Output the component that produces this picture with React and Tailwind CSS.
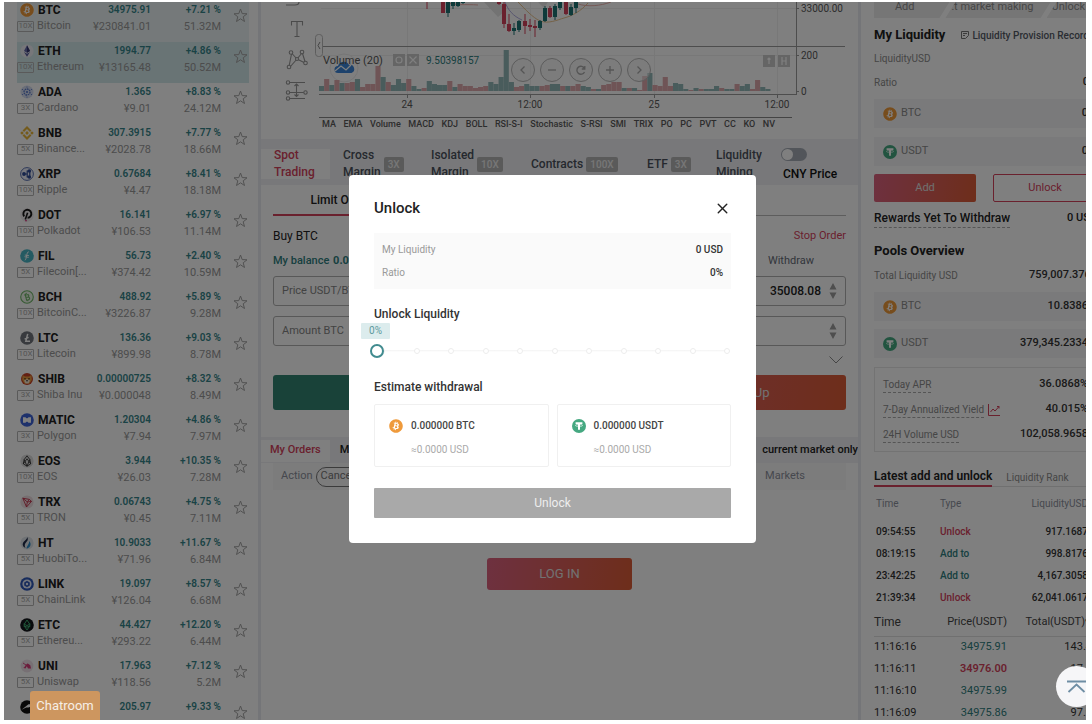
import React, { useState } from "react";
import { FaBitcoin } from "react-icons/fa";
import { X } from "lucide-react";

const GRADIENT = "bg-linear-[100deg] from-[#dd6280] to-[#dc5c36]";

function BtcIcon() {
  return (
    <span className="flex size-[14px] shrink-0 items-center justify-center rounded-full bg-white">
      <FaBitcoin className="size-[14px] text-[#ef9a3b]" aria-hidden="true" />
    </span>
  );
}

function UsdtIcon() {
  return (
    <svg className="size-[14px] shrink-0" viewBox="0 0 14 14" aria-hidden="true">
      <circle cx="7" cy="7" r="7" fill="#45a881" />
      <path d="M3.6 3.3h6.8v1.9H8v5.6H6V5.200H3.600z" fill="#fff" />
      <ellipse cx="7" cy="6.500" rx="3.600" ry="0.900" fill="none" stroke="#fff" strokeWidth="0.600" />
    </svg>
  );
}

const COIN_ART = {
  ETH: (
    <g>
      <circle cx="7" cy="7" r="6.600" fill="#eeeef4" />
      <path d="M7 1.300 10 7 7 8.800 4 7z" fill="#6468a8" />
      <path d="M7 1.300V8.800L10 7z" fill="#34376e" />
      <path d="M4 7.900 7 12.700 10 7.900 7 9.700z" fill="#5a5d9c" />
    </g>
  ),
  ADA: (
    <g fill="#5878c8">
      <circle cx="7" cy="7" r="6.500" fill="#d5dcf0" />
      <circle cx="7" cy="7" r="3" fill="none" stroke="#5878c8" strokeWidth="1.300" strokeDasharray="1.600 0.700" />
      <circle cx="7" cy="7" r="1.100" />
      <circle cx="7" cy="2" r="0.600" />
      <circle cx="7" cy="12" r="0.600" />
      <circle cx="2.500" cy="4.500" r="0.600" />
      <circle cx="11.500" cy="4.500" r="0.600" />
      <circle cx="2.500" cy="9.500" r="0.600" />
      <circle cx="11.500" cy="9.500" r="0.600" />
    </g>
  ),
  BNB: (
    <g fill="none" stroke="#e8b63a" strokeWidth="2.100">
      <path d="M3.300 5.300 7 1.600l3.700 3.700M3.300 8.700 7 12.400l3.700-3.700" />
      <path d="M7 5.100 8.900 7 7 8.900 5.100 7z" fill="#e8b63a" stroke="none" />
      <path d="M0.200 7 2 5.200 3.800 7 2 8.800zM10.200 7 12 5.200 13.800 7 12 8.800z" fill="#e8b63a" stroke="none" />
    </g>
  ),
  XRP: (
    <g>
      <circle cx="7" cy="7" r="6.400" fill="#eef1fa" stroke="#4a62a8" strokeWidth="0.900" />
      <circle cx="4" cy="7" r="1.900" fill="#2f4c98" />
      <circle cx="9.300" cy="4" r="1.800" fill="#2f4c98" />
      <circle cx="9.300" cy="10" r="1.800" fill="#2f4c98" />
      <path d="M4 7h3.200V4h2M7.200 7v3h2M9.800 4v6" fill="none" stroke="#2f4c98" strokeWidth="1.200" />
    </g>
  ),
  DOT: (
    <g>
      <circle cx="7" cy="7" r="6.800" fill="#f0ecee" />
      <path d="M4.200 8.300A4 4 0 1 1 7.600 9.800" fill="none" stroke="#161616" strokeWidth="1.900" />
      <path d="M7.600 4.800 5.300 11.500" stroke="#161616" strokeWidth="1.600" />
      <circle cx="6" cy="12.600" r="0.900" fill="#d83a80" />
    </g>
  ),
  FIL: (
    <g>
      <circle cx="7" cy="7" r="6.800" fill="#48b4c4" />
      <path d="M8.800 2.800c-1.600 0-1.700 2-2.200 4.200S5.800 11.200 4.800 11.200M4.800 6l4.200.700M4.500 7.700l4.200.700" fill="none" stroke="#fff" strokeWidth="0.900" />
    </g>
  ),
  BCH: (
    <g>
      <circle cx="7" cy="7" r="6.300" fill="#eef7ea" stroke="#6fb568" strokeWidth="1.100" />
      <path d="m5 3.900 1.600 6.300 2-.500c1.500-.400 1.400-2.400-.300-2.700 1-.800.500-2.600-1-2.300L4.400 5.200M5.800 7.500l2.500-.500M6 3l.400 1.200M7.600 10l.400 1.200" fill="none" stroke="#6fb568" strokeWidth="1.100" />
    </g>
  ),
  LTC: (
    <g>
      <circle cx="7" cy="7" r="6.800" fill="#70757c" />
      <path d="M7.700 2.900 5.800 10.300h4.200M4.600 8.100l4-1.700" fill="none" stroke="#fff" strokeWidth="1.500" />
    </g>
  ),
  SHIB: (
    <g>
      <circle cx="7" cy="7" r="6" fill="#c83f24" />
      <path d="M2.500 3 5 4.500h4L11.500 3l.3 5-2.300 3.500h-5L2.200 8z" fill="#e8993c" />
      <path d="M4 8.500 7 7l3 1.500-1.500 3h-3z" fill="#f6e7d0" />
      <circle cx="5" cy="6.800" r="0.700" fill="#222" />
      <circle cx="9" cy="6.800" r="0.700" fill="#222" />
      <circle cx="7" cy="8.800" r="0.800" fill="#222" />
    </g>
  ),
  MATIC: (
    <g>
      <circle cx="7" cy="7" r="6.800" fill="#3c63d8" />
      <path d="M3 4.200h2.400L7 5.500l1.600-1.300H11v5.600H8.600L7 8.500 5.400 9.800H3z" fill="#fff" />
      <circle cx="7" cy="3.800" r="1.100" fill="#3c63d8" />
      <circle cx="7" cy="10.200" r="1.100" fill="#3c63d8" />
    </g>
  ),
  EOS: (
    <g>
      <circle cx="7" cy="7" r="6.600" fill="#dcdcdc" />
      <path d="M7 1.800 4.200 5.500 3.300 9.800 7 12.200l3.700-2.400-.900-4.300zM4.200 5.500 7 12.200l2.800-6.700M3.300 9.800 7 4.800l3.700 5" fill="none" stroke="#222" strokeWidth="0.800" />
    </g>
  ),
  TRX: (
    <g>
      <circle cx="7" cy="7" r="6.600" fill="#efdfe2" />
      <path d="m2.800 3.200 6.500 1.200 2.200 2L6.500 12zM2.800 3.200 7.300 7l4.200-.600M7.300 7 6.500 12M7.300 7l2-2.600" fill="none" stroke="#c0304a" strokeWidth="0.900" />
    </g>
  ),
  HT: (
    <g>
      <circle cx="7" cy="7" r="6.600" fill="#dfe5ea" />
      <path d="M7.300 1C8.500 3.500 7.500 5 6 6.500S4.400 10 5.500 12C2.200 10.500 2 7.500 4 5.500S7 3 7.300 1z" fill="#1f2a48" />
      <path d="M9.200 5c2.200 2.500 2 6-2.500 7.800C5.900 10.500 9.300 9 9.200 5z" fill="#2a8bc8" />
    </g>
  ),
  LINK: (
    <g>
      <circle cx="7" cy="7" r="6.800" fill="#2f58b8" />
      <circle cx="7" cy="7" r="4.600" fill="#e6ecfa" />
      <path d="m7 3.800 2.800 1.600v3.200L7 10.200 4.200 8.600V5.400z" fill="#2f58b8" />
      <circle cx="7" cy="7" r="1.200" fill="#e6ecfa" />
    </g>
  ),
  ETC: (
    <g>
      <circle cx="7" cy="7" r="6.800" fill="#12161a" />
      <path d="m7 2 2.700 4.200L7 7.600 4.300 6.200zM4.300 8 7 12l2.700-4L7 9.200zM4.200 5.400v3.400M9.800 5.400v3.400" fill="none" stroke="#3fae73" strokeWidth="1" />
    </g>
  ),
  UNI: (
    <g>
      <circle cx="7" cy="7" r="6.400" fill="#efe0e8" />
      <path d="M2.800 8.800c2.200.400 2.500-3.800 5-4.300l2.500 1.800.700 3.300H8L6.800 7.300 5.500 9.600z" fill="#d83a78" />
      <path d="m3 4 3 2" stroke="#d83a78" strokeWidth="0.900" />
    </g>
  ),
  BSV: (
    <g>
      <circle cx="7" cy="7" r="6.800" fill="#111" />
      <path d="M1.500 9.800 8.500 4.300h5v1.500L8.300 7.500h-2z" fill="#fff" />
    </g>
  ),
};

const COINS = [
  ["BTC", "10X", "Bitcoin", "34975.91", "¥230841.01", "+7.21 %", "51.32M"],
  ["ETH", "10X", "Ethereum", "1994.77", "¥13165.48", "+4.86 %", "50.52M"],
  ["ADA", "3X", "Cardano", "1.365", "¥9.01", "+8.83 %", "24.12M"],
  ["BNB", "5X", "Binance...", "307.3915", "¥2028.78", "+7.77 %", "18.66M"],
  ["XRP", "10X", "Ripple", "0.67684", "¥4.47", "+8.41 %", "18.18M"],
  ["DOT", "10X", "Polkadot", "16.141", "¥106.53", "+6.97 %", "11.14M"],
  ["FIL", "5X", "Filecoin[...", "56.73", "¥374.42", "+2.40 %", "10.59M"],
  ["BCH", "10X", "BitcoinC...", "488.92", "¥3226.87", "+5.89 %", "9.28M"],
  ["LTC", "10X", "Litecoin", "136.36", "¥899.98", "+9.03 %", "8.78M"],
  ["SHIB", "3X", "Shiba Inu", "0.00000725", "¥0.000048", "+8.32 %", "8.49M"],
  ["MATIC", "3X", "Polygon", "1.20304", "¥7.94", "+4.86 %", "7.97M"],
  ["EOS", "10X", "EOS", "3.944", "¥26.03", "+10.35 %", "7.28M"],
  ["TRX", "5X", "TRON", "0.06743", "¥0.45", "+4.75 %", "7.11M"],
  ["HT", "5X", "HuobiTo...", "10.9033", "¥71.96", "+11.67 %", "6.84M"],
  ["LINK", "5X", "ChainLink", "19.097", "¥126.04", "+8.57 %", "6.68M"],
  ["ETC", "5X", "Ethereu...", "44.427", "¥293.22", "+12.20 %", "6.44M"],
  ["UNI", "5X", "Uniswap", "17.963", "¥118.56", "+7.12 %", "5.2M"],
  ["BSV", "", "", "205.97", "", "+9.33 %", ""],
];

function MarketList() {
  return (
    <aside className="w-[254px] shrink-0 overflow-hidden bg-white pr-[9px] pl-[13px]">
      <table className="-mt-px w-full table-fixed border-collapse">
        <colgroup>
          <col className="w-[76px]" />
          <col className="w-[58px]" />
          <col className="w-[70px]" />
          <col className="w-[28px]" />
        </colgroup>
        <tbody>
          {COINS.map(([sym, lev, name, price, cny, change, vol], i) => (
            <tr key={sym} className={"h-[41px] align-top " + (i === 0 ? "bg-[#ebf3f4]" : i === 1 ? "bg-[#d3e8eb]" : "")}>
              <td className="p-0">
                <div className="mt-px flex h-4 items-center gap-1 pl-[3px] text-[12px] leading-4 font-bold text-[#202020]">
                  {sym === "BTC" ? (
                    <BtcIcon />
                  ) : (
                    <svg className="size-[14px] shrink-0" viewBox="0 0 14 14" aria-hidden="true">
                      {COIN_ART[sym]}
                    </svg>
                  )}
                  {sym === "BSV" ? "" : sym}
                </div>
                {lev && (
                  <div className="flex h-4 items-center gap-[3px] whitespace-nowrap text-[11px] leading-4 text-[#999]">
                    <span className="flex h-[11px] w-[17px] shrink-0 items-center justify-center rounded-[1px] border border-[#b4b4b4] text-[8px] leading-none text-[#aaa]">
                      {lev}
                    </span>
                    {name}
                  </div>
                )}
              </td>
              <td className="p-0 text-right whitespace-nowrap">
                <div className="mt-px text-[10px] leading-4 font-semibold text-[#35858a]">{price}</div>
                <div className="mt-px text-[11px] leading-4 text-[#999]">{cny}</div>
              </td>
              <td className="p-0 text-right whitespace-nowrap">
                <div className="mt-px text-[10px] leading-4 font-semibold text-[#35858a]">{change}</div>
                <div className="mt-px text-[11px] leading-4 text-[#999]">{vol}</div>
              </td>
              <td className="p-0">
                <button type="button" aria-label={"Favourite " + sym} className="mt-[7px] ml-[12px] block">
                  <svg className="size-[15px]" viewBox="0 0 15 15" fill="none" stroke="#a3a3a3" strokeWidth="1" aria-hidden="true">
                    <path d="m7.500 1 1.700 4.600 4.800.200-3.800 3 1.300 4.700-4-2.700-4 2.700 1.300-4.700-3.800-3 4.800-.200z" />
                  </svg>
                </button>
              </td>
            </tr>
          ))}
        </tbody>
      </table>
    </aside>
  );
}

// colour + height of every volume bar, left to right
const VOLUME =
  "g5 r12 g6 r11 g8 r8 r9 g12 r4 r7 r7 r25 g14 r9 g6 g12 g8 r12 g5 g2 r3 g10 g7 g6 g6 r10 g4 r7 r5 r5 r3 r4 r5 g9 g7 g14 g41 g9 r4 r5 g7 g5 g5 r5 r6 g7 g7 " +
  "r5 g5 r5 r7 g5 g4 r2 g2 r6 r7 r9 r9 g3 r3 g3 r1 r15 g18 r6 r5 r14 r5 g8 g7 g2 r1 g3 r2 g2 g2 g5 r3 g2 g2 r7 g5 g7 r2 r11 g4 g2";

// x, body top, body bottom, wick top, wick bottom, colour
const CANDLES = [
  [427, 0, 2, 0, 9, "r"],
  [443, 0, 13, 0, 13, "r"],
  [448, 0, 13, 0, 17, "g"],
  [453, 0, 6, 0, 9, "g"],
  [458, 0, 6, 0, 7, "g"],
  [463, 0, 3, 0, 4, "g"],
  [499, 0, 4, 0, 5, "r"],
  [504, 4, 24, 2, 28, "r"],
  [509, 24, 31, 14, 32, "r"],
  [514, 28, 31, 23, 35, "g"],
  [519, 21, 30, 20, 32, "g"],
  [525, 21, 26, 14, 34, "r"],
  [530, 25, 27, 19, 31, "r"],
  [535, 26, 28, 20, 37, "r"],
  [540, 21, 28, 20, 30, "g"],
  [545, 8, 21, 6, 22, "g"],
  [550, 8, 17, 6, 18, "r"],
  [555, 6, 17, 4, 20, "g"],
  [560, 0, 8, 0, 10, "g"],
  [566, 2, 14, 0, 15, "r"],
  [571, 7, 15, 4, 16, "g"],
  [576, 0, 8, 0, 13, "g"],
];

const INDICATORS = "MA EMA Volume MACD KDJ BOLL RSI-S-I Stochastic S-RSI SMI TRIX PO PC PVT CC KO NV".split(" ");

function ChartNav({ label, d }) {
  return (
    <button type="button" aria-label={label} className="flex size-6 items-center justify-center rounded-full border border-[#b8b8b8] bg-[#f2f2f2]/50">
      <svg className="size-[10px]" viewBox="0 0 10 10" fill="none" stroke="#aaa" strokeWidth="1.300" aria-hidden="true">
        <path d={d} />
      </svg>
    </button>
  );
}

function Chart() {
  return (
    <section className="bg-white pb-[9px]">
      <div className="relative overflow-hidden">
        <svg className="block h-[116px] w-[597px]" viewBox="261 2 597 116" role="img" aria-label="BTC price and volume chart">
          <g stroke="#f0f0f0">
            <path d="M407.500 2v93M530.500 2v93M654.500 2v93M777.500 2v93M321 8.500h475M321 55.500h475" />
          </g>
          {/* drawing tools */}
          <g fill="none" stroke="#969696" strokeWidth="1.100">
            <path d="M286 5h9c3 0 4-1 4-3" />
            <path d="M291.500 25.500v-4h11v4M297 21.500v15M294.500 36.500h5" />
            <path d="M289 66.500 291.500 54M291.500 53l5.500 6 5-6M297 59l-7 8M297 59l8 4M302.500 53.500l2.500 8" />
            <circle cx="291" cy="52.500" r="1.800" fill="#fff" />
            <circle cx="302" cy="52" r="1.800" fill="#fff" />
            <circle cx="297" cy="59" r="1.500" fill="#fff" />
            <circle cx="289" cy="67" r="1.800" fill="#fff" />
            <circle cx="305.500" cy="63" r="1.800" fill="#fff" />
            <path d="M289 82.500h16M289 92.500h15M289 98.500h16M296.500 84v12M294.500 86l2-2 2 2M294.500 94.500l2 2 2-2" />
            <circle cx="288" cy="82.500" r="1.700" fill="#fff" />
            <circle cx="288" cy="92.500" r="1.700" fill="#fff" />
            <circle cx="305.500" cy="92.500" r="1.700" fill="#fff" />
            <circle cx="288" cy="98.500" r="1.700" fill="#fff" />
          </g>
          <path d="m484 2 14 15 7-6-6-9zM538 2h10l-4 6z" fill="#e6e6e6" />
          {/* price pane */}
          <path d="M505 2c3 8 8 14 17 18" fill="none" stroke="#a7a3dd" strokeWidth="0.900" />
          <path d="M518 2c8 8 14 15 22 19 9 3 17-1 24-3 8-2 17-7 24-15" fill="none" stroke="#e6bb80" strokeWidth="0.900" />
          <path d="M578 4c10 3 22 2 33-2M446 2c8 4 20 2 32 3" fill="none" stroke="#e9a9a4" strokeWidth="0.900" />
          {CANDLES.map(([x, top, bottom, wickTop, wickBottom, c]) => (
            <g key={x} fill={c === "r" ? "#d5425c" : "#1c7474"}>
              <rect x={x - 2} y={top} width="4" height={bottom - top} />
              <rect x={x - 0.5} y={wickTop} width="1" height={wickBottom - wickTop} />
            </g>
          ))}
          {/* volume pane */}
          <circle cx="344" cy="68" r="14" fill="#fff" stroke="#ececec" />
          {VOLUME.split(" ").map((bar, i) => (
            <rect
              key={i}
              x={319 + i * 5.13}
              y={91 - Number(bar.slice(1))}
              width="5.130"
              height={Number(bar.slice(1))}
              fill={bar[0] === "r" ? "#dfa9ad" : "#92b8b8"}
            />
          ))}
          <path d="M338 73a3.500 3.500 0 0 1 0-7 6 6 0 0 1 11-1 4.200 4.200 0 0 1 2.500 8z" fill="#3b84d8" />
          <path d="m335 71 6-5 5 4 5-5" fill="none" stroke="#fff" strokeWidth="1.300" />
          <g stroke="#9a9a9a">
            <path d="M321 46.500h524M319 94.500h477M796.500 2v93" />
            <path d="M319 117.500h473" stroke="#888" />
            <path d="M796 8.500h3M796 55.500h3M796 91.500h3M407.500 95v3M530.500 95v3M654.500 95v3M777.500 95v3" />
          </g>
          <rect x="315.500" y="34.500" width="7" height="22" rx="3" fill="#fff" stroke="#bbb" />
          <path d="m320 42-2 3.500 2 3.500" fill="none" stroke="#888" />
          <g fontFamily="Roboto, sans-serif" fontSize="10" fill="#5a5a5a">
            <text x="323" y="63.500" fontSize="11">Volume (20)</text>
            <text x="426" y="63.500" fill="#2e8080">9.50398157</text>
            <text x="801" y="12">33000.00</text>
            <text x="801" y="59">200</text>
            <text x="801" y="95">0</text>
            <g textAnchor="middle">
              <text x="407" y="108">24</text>
              <text x="530" y="108">12:00</text>
              <text x="654" y="108">25</text>
              <text x="777" y="108">12:00</text>
            </g>
          </g>
          <g fill="#cacaca">
            <rect x="393" y="54" width="12" height="12" />
            <rect x="407" y="54" width="12" height="12" />
            <rect x="763" y="55" width="12" height="12" />
            <rect x="778" y="55" width="12" height="12" />
          </g>
          <g fill="none" stroke="#fff" strokeWidth="1.200">
            <circle cx="399" cy="60" r="3" />
            <path d="m409.500 56.500 7 7M416.500 56.500l-7 7" />
            <path d="M769 64v-6M767.500 59.500l1.500-1.500 1.500 1.500M782 57v8M786 57v8M782 61h4" />
          </g>
        </svg>
        <div className="absolute top-[56px] left-[250px] flex gap-[5px]">
          <ChartNav label="Scroll left" d="M6.500 1.500 3 5l3.500 3.500" />
          <ChartNav label="Zoom out" d="M1 5h8" />
          <ChartNav label="Reset" d="M8.500 3.500A4 4 0 1 0 8.500 7M8.800 1v3h-3" />
          <ChartNav label="Zoom in" d="M1 5h8M5 1v8" />
          <ChartNav label="Scroll right" d="M3.500 1.500 7 5 3.500 8.500" />
        </div>
      </div>
      <div className="ml-[61px] flex w-[453px] justify-between text-[9px] leading-3 font-medium text-[#5a5a5a]">
        {INDICATORS.map((t) => (
          <button key={t} type="button">
            {t}
          </button>
        ))}
      </div>
    </section>
  );
}

function TradeTab({ width, label, badge, active }) {
  return (
    <button type="button" className={"flex shrink-0 items-center gap-[3px] pl-[13px] text-left text-[12px] leading-[17px] font-medium " + width + (active ? " bg-white text-[#d5425c]" : " text-[#4b515c]")}>
      <span className="w-min">{label}</span>
      {badge && <span className="rounded-[2px] bg-[#b5b5b5] px-1 text-[10px] leading-[15px] text-[#eee]">{badge}</span>}
    </button>
  );
}

function Spinner() {
  return (
    <svg className="h-[18px] w-2" viewBox="0 0 8 18" fill="#9c9c9c" aria-hidden="true">
      <path d="M4 1 7.500 7.500h-7zM4 17 .5 10.500h7z" />
    </svg>
  );
}

function Field({ label, value }) {
  return (
    <label className="flex h-[30px] items-center justify-between gap-2 rounded-[3px] border border-[#b0b0b0] px-2 text-[11px] text-[#858585]">
      <span className="shrink-0">{label}</span>
      <input type="text" defaultValue={value} className="min-w-0 flex-1 text-right text-[12px] font-medium text-[#222] outline-none" />
      <Spinner />
    </label>
  );
}

function OrderColumn({ title, right, side, price, action, actionLabel, color }) {
  return (
    <div className="flex flex-1 flex-col">
      <div className="flex h-5 items-center justify-between text-[12px] text-[#222]">
        <span>{title}</span>
        {right && <a href="#stop" className="text-[11px] text-[#d5425c]">{right}</a>}
      </div>
      <div className="mt-[5px] flex h-5 items-center justify-between text-[11px] font-medium text-[#2e8080]">
        <span>
          My balance <b className="ml-px">0.00000</b>
        </span>
        <a href="#withdraw" className="mr-8 font-normal text-[#666c78]">{side}</a>
      </div>
      <div className="mt-[5px] flex flex-col gap-[10px]">
        <Field label="Price USDT/BTC" value={price} />
        <Field label="Amount BTC" value="" />
      </div>
      <div className="mt-[6px] flex h-4 items-center justify-end pr-[3px]">
        <svg className="h-2 w-[14px]" viewBox="0 0 14 8" fill="none" stroke="#8a8a8a" aria-hidden="true">
          <path d="m.5.5 6.500 6.500L13.500.5" />
        </svg>
      </div>
      <button type="button" aria-label={actionLabel} className={"mt-[7px] h-[35px] rounded-[3px] text-[13px] text-[#e4e4e4] " + color}>
        {action}
      </button>
    </div>
  );
}

function TradePanel() {
  return (
    <main className="flex min-w-0 flex-1 flex-col overflow-hidden bg-white">
      <Chart />
      <div className="flex h-[46px] items-stretch bg-[#f0f1f4] pr-3">
        <div className="flex items-center pt-1">
          <TradeTab width="w-[69px] h-[30px]" label="Spot Trading" active />
          <TradeTab width="w-[88px]" label="Cross Margin" badge="3X" />
          <TradeTab width="w-[100px]" label="Isolated Margin" badge="10X" />
          <TradeTab width="w-[116px]" label="Contracts" badge="100X" />
          <TradeTab width="w-[69px]" label="ETF" badge="3X" />
          <TradeTab width="w-[72px]" label="Liquidity Mining" />
        </div>
        <label className="ml-[6px] flex flex-col pt-[9px] text-[12px] leading-[17px] font-medium whitespace-nowrap text-[#111]">
          <input type="checkbox" className="peer sr-only" />
          <span className="flex h-[13px] w-[26px] rounded-full bg-[#a5abb5] p-px peer-checked:justify-end">
            <span className="size-[11px] rounded-full bg-white" />
          </span>
          <span className="mt-[5px] ml-[2px]">CNY Price</span>
        </label>
      </div>
      <div className="mx-3 flex border-b border-[#bbb]">
        <button type="button" className="-mb-px h-[31px] w-[143px] border-b-2 border-[#d5425c] text-[12px] font-medium text-[#222]">
          <span className="-ml-[8px]">Limit Order</span>
        </button>
      </div>
      <div className="mx-3 mt-[10px] flex gap-6">
        <OrderColumn title="Buy BTC" side="Deposit" price="35008.08" actionLabel="Log In or Sign Up" color="bg-[#338472]" />
        <OrderColumn title="Sell BTC" right="Stop Order" side="Withdraw" price="35008.08" action="Log In Now / Sign Up" color={GRADIENT} />
      </div>
      <div className="mt-[27px] flex h-[26px] items-center justify-between bg-[#f0f1f4] pt-px text-[11px] font-medium text-[#222]">
        <div className="flex h-full items-center">
          <button type="button" className="h-[22px] bg-white px-[9px] text-[#d5425c]">My Orders</button>
          <button type="button" className="ml-[10px]">My Trades</button>
        </div>
        <label className="flex items-center gap-2">
          <input type="checkbox" className="size-3" />
          <span>Show</span>
          <span>current market only</span>
        </label>
      </div>
      <div className="mx-3 flex h-[27px] items-center justify-between bg-[#f8f8f9] pr-[41px] pl-2 text-[11px] text-[#8c909c]">
        <div className="flex items-center gap-[3px]">
          Action
          <button type="button" className="h-5 rounded-full border border-[#777] px-1 text-[#777]">Cancel All</button>
        </div>
        <span>Markets</span>
      </div>
      <div className="flex flex-1 justify-center pt-[68px]">
        <button type="button" className={"h-8 w-[145px] rounded-[3px] text-[13px] text-[#e4e4e4] " + GRADIENT}>
          LOG IN
        </button>
      </div>
    </main>
  );
}

function PoolRow({ icon, name, value }) {
  return (
    <div className="flex h-[29px] items-center gap-1 bg-[#f5f5f6] px-[9px] text-[11px]">
      {icon}
      <span className="text-[#8c8c8c]">{name}</span>
      <span className="ml-auto font-medium text-[#333]">{value}</span>
    </div>
  );
}

function StatRow({ label, value, chart }) {
  return (
    <div className="flex h-[25px] items-center text-[10px]">
      <span className="border-b border-dashed border-[#aaa] text-[#8c8c8c]">{label}</span>
      {chart && (
        <svg className="ml-1 size-3" viewBox="0 0 12 12" fill="none" stroke="#d5425c" aria-hidden="true">
          <path d="M.5 0v11.500H12" />
          <path d="m2.500 8 2.500-3 2 2 4-4.500M9 2.500h2v2" />
        </svg>
      )}
      <span className="ml-auto text-[11px] font-medium text-[#333]">{value}</span>
    </div>
  );
}

const EVENTS = [
  ["09:54:55", "Unlock", "917.1687"],
  ["08:19:15", "Add to", "998.8176"],
  ["23:42:25", "Add to", "4,167.3058"],
  ["21:39:34", "Unlock", "62,041.0617"],
];

const TRADES = [
  ["11:16:16", "34975.91", "143.4", "up"],
  ["11:16:11", "34976.00", "17.4", "down"],
  ["11:16:10", "34975.99", "20.9", "up"],
  ["11:16:09", "34975.86", "97.9", "up"],
];

function LiquidityPanel() {
  return (
    <aside className="w-[225px] shrink-0 overflow-hidden bg-white pl-[13px]">
      <div className="w-[223px]">
        <div className="-mr-3 flex h-4 text-[11px] leading-[10px] text-[#8c8c8c]">
          <span className="w-[76px] bg-[#ececec] pr-[14px] text-center [clip-path:polygon(0_0,100%_0,calc(100%-10px)_100%,0_100%)]">Add</span>
          <span className="-ml-1 w-[106px] overflow-hidden bg-[#ececec] pl-[6px] whitespace-nowrap [clip-path:polygon(10px_0,100%_0,calc(100%-10px)_100%,0_100%)]">
            :t market making
          </span>
          <span className="-ml-1 w-[63px] bg-[#ececec] pl-[5px] [clip-path:polygon(10px_0,100%_0,100%_100%,0_100%)]">Unlock</span>
        </div>
        <div className="mt-[7px] flex h-5 items-center whitespace-nowrap">
          <h2 className="text-[13px] font-bold text-[#222]">My Liquidity</h2>
          <a href="#records" className="ml-4 flex items-center gap-[3px] text-[10px] font-medium text-[#555b66]">
            <svg className="size-2" viewBox="0 0 8 8" fill="none" stroke="#777" aria-hidden="true">
              <path d="M.5.5h7v4l-3 3h-4zM2 2.500h4M2 4.500h2" />
            </svg>
            Liquidity Provision Records
          </a>
        </div>
        <div className="mt-px flex h-6 items-center text-[10px] text-[#8c8c8c]">LiquidityUSD</div>
        <div className="flex h-6 items-center justify-between text-[10px] text-[#8c8c8c]">
          Ratio <span className="text-[11px] font-medium text-[#333]">0%</span>
        </div>
        <div className="mt-[5px] flex flex-col gap-[9px]">
          <PoolRow icon={<BtcIcon />} name="BTC" value="0" />
          <PoolRow icon={<UsdtIcon />} name="USDT" value="0" />
        </div>
        <div className="mt-2 flex gap-[17px] text-[11px]">
          <button type="button" className={"h-7 flex-1 rounded-[2px] text-[#e0e0e0] " + GRADIENT}>Add</button>
          <button type="button" className="h-7 flex-1 rounded-[2px] border border-[#d5425c] text-[#d5425c]">Unlock</button>
        </div>
        <div className="mt-[7px] flex h-[18px] items-center justify-between text-[12px] font-medium whitespace-nowrap text-[#222]">
          <span className="border-b border-dashed border-[#aaa]">Rewards Yet To Withdraw</span>
          <span className="text-[11px]">0 USD</span>
        </div>
        <h2 className="mt-[14px] text-[13px] leading-5 font-bold text-[#222]">Pools Overview</h2>
        <div className="mt-[2px] flex h-6 items-center justify-between text-[10px] text-[#8c8c8c]">
          Total Liquidity USD <span className="text-[11px] font-medium text-[#333]">759,007.3767</span>
        </div>
        <div className="mt-[5px] flex flex-col gap-2">
          <PoolRow icon={<BtcIcon />} name="BTC" value="10.8386" />
          <PoolRow icon={<UsdtIcon />} name="USDT" value="379,345.2334" />
        </div>
        <div className="mt-[9px] border border-[#e6e6e6] px-2 pt-1 pb-1">
          <StatRow label="Today APR" value="36.0868%" />
          <StatRow label="7-Day Annualized Yield" value="40.015%" chart />
          <StatRow label="24H Volume USD" value="102,058.9658" />
        </div>
        <div className="mt-[15px] flex h-5 items-start gap-[14px] border-b border-[#e0e0e0] whitespace-nowrap">
          <button type="button" className="h-5 border-b-2 border-[#d5425c] text-[12px] font-semibold text-[#222]">Latest add and unlock</button>
          <button type="button" className="h-5 text-[10px] text-[#8c8c8c]">Liquidity Rank</button>
        </div>
        <table className="w-full table-fixed">
          <thead>
            <tr className="h-[33px] text-left text-[10px] text-[#8c909c]">
              <th className="w-[66px] p-0 pl-[2px] font-normal">Time</th>
              <th className="p-0 font-normal">Type</th>
              <th className="p-0 pr-[9px] text-right font-normal">LiquidityUSD</th>
            </tr>
          </thead>
          <tbody>
            {EVENTS.map(([time, type, amount]) => (
              <tr key={time} className="h-[22px] text-[10px] font-medium text-[#333]">
                <td className="p-0 pl-[2px]">{time}</td>
                <td className={"p-0 " + (type === "Unlock" ? "text-[#d5425c]" : "text-[#2e8080]")}>{type}</td>
                <td className="p-0 pr-[9px] text-right">{amount}</td>
              </tr>
            ))}
          </tbody>
        </table>
        <table className="w-full table-fixed">
          <thead>
            <tr className="h-[28px] border-b border-[#e0e0e0] text-left text-[11px] text-[#444]">
              <th className="w-[58px] p-0 text-[12px] font-normal">Time</th>
              <th className="w-[75px] p-0 text-right font-normal">Price(USDT)</th>
              <th className="p-0 pr-[6px] text-right font-normal">Total(USDT)▾</th>
            </tr>
          </thead>
          <tbody>
            {TRADES.map(([time, price, total, dir]) => (
              <tr key={time} className="h-[22px] text-[11px] text-[#333]">
                <td className="p-0">{time}</td>
                <td className={"p-0 text-right " + (dir === "up" ? "text-[#2e8080]" : "font-semibold text-[#d5425c]")}>{price}</td>
                <td className="p-0 pr-[5px] text-right">{total}</td>
              </tr>
            ))}
          </tbody>
        </table>
      </div>
    </aside>
  );
}

function EstimateCard({ icon, amount }) {
  return (
    <div className="flex-1 rounded-[2px] border border-[#f0f0f0] px-[14px] pt-[9px] pb-1 text-[10px] leading-6">
      <div className="flex items-center gap-2 font-medium text-[#444]">
        {icon}
        {amount}
      </div>
      <div className="pl-[22px] text-[#aaa]">≈0.0000 USD</div>
    </div>
  );
}

function UnlockDialog() {
  const [pct, setPct] = useState(0);
  return (
    <div role="dialog" aria-labelledby="unlock-title" className="w-[407px] rounded-[4px] bg-white px-[25px] pt-[22px] pb-[25px] text-[#333]">
      <div className="flex h-[22px] items-center justify-between">
        <h1 id="unlock-title" className="text-[15px] font-medium text-[#222]">Unlock</h1>
        <button type="button" aria-label="Close">
          <X className="size-[17px] text-[#222]" strokeWidth={2} />
        </button>
      </div>
      <dl className="mt-[14px] bg-[#fafafa] px-2 py-[5px] text-[10px] leading-[23px]">
        <div className="flex justify-between">
          <dt className="text-[#999]">My Liquidity</dt>
          <dd className="font-medium">0 USD</dd>
        </div>
        <div className="flex justify-between">
          <dt className="text-[#999]">Ratio</dt>
          <dd className="font-medium">0%</dd>
        </div>
      </dl>
      <label htmlFor="unlock-pct" className="mt-4 block text-[12px] leading-[18px] font-medium">Unlock Liquidity</label>
      <output htmlFor="unlock-pct" className="-ml-[13px] block h-4 w-[29px] rounded-[1px] bg-[#dceced] text-center text-[10px] leading-4 text-[#5e9a9e]">
        {pct}%
      </output>
      <div className="relative -mx-1 mt-[5px] h-[14px]">
        <div className="mr-[5px] ml-[9px] flex h-full items-center justify-between bg-linear-to-b from-transparent from-[6px] via-[#f3f3f3] via-[6px] to-transparent to-[8px]">
          {Array.from({ length: 11 }, (_, i) => (
            <span key={i} className="size-[6px] rounded-full border border-[#ededed] bg-white" />
          ))}
        </div>
        <input
          id="unlock-pct"
          type="range"
          min="0"
          max="100"
          value={pct}
          onChange={(e) => setPct(e.target.value)}
          className="absolute inset-0 h-[14px] w-full appearance-none bg-transparent [&::-webkit-slider-thumb]:size-[14px] [&::-webkit-slider-thumb]:appearance-none [&::-webkit-slider-thumb]:rounded-full [&::-webkit-slider-thumb]:border-2 [&::-webkit-slider-thumb]:border-[#418b8f] [&::-webkit-slider-thumb]:bg-white"
        />
      </div>
      <h2 className="mt-5 text-[12px] leading-[18px] font-medium">Estimate withdrawal</h2>
      <div className="mt-2 flex gap-2">
        <EstimateCard icon={<BtcIcon />} amount="0.000000 BTC" />
        <EstimateCard icon={<UsdtIcon />} amount="0.000000 USDT" />
      </div>
      <button type="button" className="mt-[21px] h-[30px] w-full rounded-[1px] bg-[#a9a9a9] text-[12px] text-[#eee]">Unlock</button>
    </div>
  );
}

export default function App() {
  return (
    <div className="flex h-screen bg-white pt-[2px] pr-[6px] pb-1 pl-1 font-['Roboto',sans-serif]">
      <div className="relative flex min-w-0 flex-1 gap-[3px] overflow-hidden bg-[#e8eaf0]">
        <MarketList />
        <TradePanel />
        <LiquidityPanel />
        <div className="absolute inset-0 flex items-center justify-center bg-black/50 pb-1 pl-[15px]">
          <UnlockDialog />
        </div>
        <button type="button" className="absolute bottom-0 left-[26px] h-[29px] w-[70px] rounded-t-[3px] bg-[#cd965f] text-[13px] text-[#f6eee6]">Chatroom</button>
        <button type="button" aria-label="Back to top" className="absolute -right-[11px] bottom-[13px] flex size-[41px] items-center justify-center rounded-full bg-[#f6f6f8]">
          <svg className="h-[13px] w-[19px]" viewBox="0 0 19 13" fill="none" stroke="#6f8ea4" strokeWidth="1.800" aria-hidden="true">
            <path d="M0 1.500h19M1.500 12 9.500 4.500l8 7.500" />
          </svg>
        </button>
      </div>
    </div>
  );
}
